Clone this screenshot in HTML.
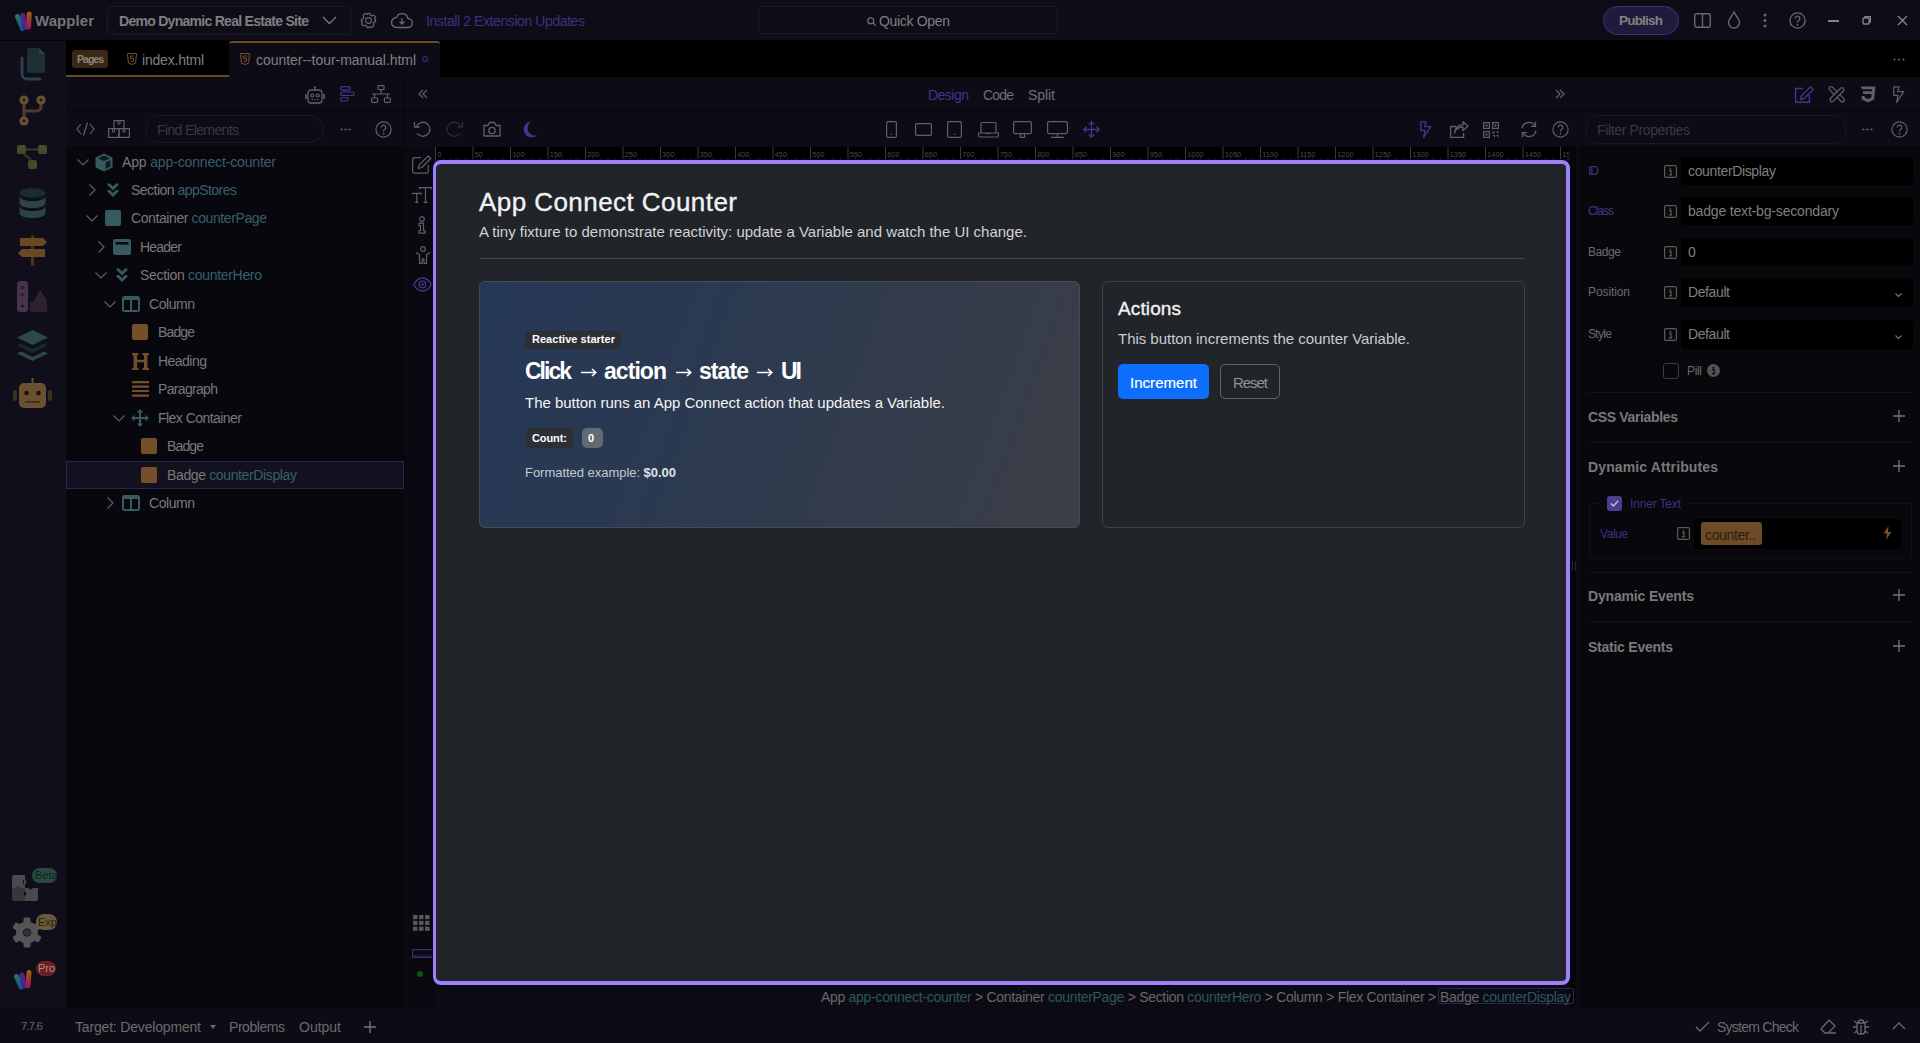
<!DOCTYPE html>
<html><head><meta charset="utf-8">
<style>
*{box-sizing:border-box;margin:0;padding:0}
html,body{width:1920px;height:1043px;overflow:hidden;background:#0a0911;font-family:"Liberation Sans",sans-serif;color:#858384}
.a{position:absolute}
svg{display:block;position:absolute;overflow:visible}
.t{position:absolute;white-space:nowrap;line-height:1}
#title{left:0;top:0;width:1920px;height:40px;background:#0e0c17}
#act{left:0;top:41px;width:66px;height:967px;background:#0f0e1a}
#tabs{left:66px;top:41px;width:1854px;height:36px;background:#000}
#lpanel{left:66px;top:146px;width:338px;height:862px;background:#08070d}
#lhead{left:66px;top:77px;width:338px;height:69px;background:#0d0c16}
#center{left:405px;top:146px;width:1176px;height:862px;background:#0c0b14}
#chead{left:405px;top:77px;width:1176px;height:69px;background:#0d0c16}
#rpanel{left:1582px;top:146px;width:338px;height:862px;background:#07070c}
#rhead{left:1582px;top:77px;width:338px;height:69px;background:#0d0c16}
#status{left:0;top:1008px;width:1920px;height:35px;background:#0d0c16}
.hl{height:1px;background:#07060c}
.vl{width:1px;background:#07060c}
.gray{color:#858384}
.teal{color:#30565e}
.purp{color:#41378c}
</style></head>
<body>
<!-- TITLE BAR -->
<div id="title" class="a"></div>
<div class="a hl" style="left:0;top:40px;width:1920px;background:#050409"></div>
<div id="act" class="a"></div>
<div id="tabs" class="a"></div>
<div id="lhead" class="a"></div>
<div id="lpanel" class="a"></div>
<div id="chead" class="a"></div>
<div id="center" class="a"></div>
<div id="rhead" class="a"></div>
<div id="rpanel" class="a"></div>
<div id="status" class="a"></div>

<!-- title content -->
<svg style="left:14px;top:11px" width="20" height="19" viewBox="0 0 20 19"><defs><linearGradient id="lg1" x1="0" y1="0" x2="0" y2="1"><stop offset="0" stop-color="#1a7a6a"/><stop offset="1" stop-color="#1d4f8a"/></linearGradient><linearGradient id="lg2" x1="0" y1="0" x2="0" y2="1"><stop offset="0" stop-color="#6a1a8a"/><stop offset="1" stop-color="#3a2a8a"/></linearGradient><linearGradient id="lg3" x1="0" y1="0" x2="0" y2="1"><stop offset="0" stop-color="#9a5a14"/><stop offset="1" stop-color="#9a1a5a"/></linearGradient></defs>
<path d="M3.5 5.5 L8.5 17.5" stroke="url(#lg1)" stroke-width="5" stroke-linecap="round"/>
<path d="M8.8 4.5 L11 16.5" stroke="url(#lg2)" stroke-width="5" stroke-linecap="round"/>
<path d="M15.2 3 L14.6 16" stroke="url(#lg3)" stroke-width="5" stroke-linecap="round"/></svg>
<div class="t" style="left:35px;top:13px;font-size:15px;color:#767474;font-weight:bold;letter-spacing:0.062px">Wappler</div>
<div class="a" style="left:107px;top:6px;width:244px;height:29px;border:1px solid #1c1a28;border-radius:4px"></div>
<div class="t" style="left:119px;top:14px;font-size:14px;color:#817f7f;font-weight:bold;letter-spacing:-0.718px">Demo Dynamic Real Estate Site</div>
<svg style="left:322px;top:16px" width="15" height="9" viewBox="0 0 15 9"><path d="M1 1 L7.5 7.5 L14 1" fill="none" stroke="#7a7670" stroke-width="1.4"/></svg>
<svg style="left:360px;top:12px" width="17" height="17" viewBox="0 0 24 24"><path d="M12 8a4 4 0 1 0 0 8a4 4 0 1 0 0-8z M10 2h4l.6 2.6 2.2 1 2.3-1.4 2.8 2.8-1.4 2.3 1 2.2L22 10v4l-2.6.6-1 2.2 1.4 2.3-2.8 2.8-2.3-1.4-2.2 1L14 22h-4l-.6-2.6-2.2-1-2.3 1.4-2.8-2.8 1.4-2.3-1-2.2L2 14v-4l2.6-.6 1-2.2L4.2 4.9 7 2.1l2.3 1.4 2.2-1z" fill="none" stroke="#6a6869" stroke-width="1.6"/></svg>
<svg style="left:391px;top:12px" width="22" height="17" viewBox="0 0 22 17"><path d="M5.5 15.5h11a4.5 4.5 0 0 0 .5-9 6 6 0 0 0-11.5-1A5 5 0 0 0 5.5 15.5z" fill="none" stroke="#6a6869" stroke-width="1.4"/><path d="M11 6v6M8.5 9.5 11 12l2.5-2.5" fill="none" stroke="#6a6869" stroke-width="1.3"/></svg>
<div class="t" style="left:426px;top:14px;font-size:14px;color:#3b3280;letter-spacing:-0.41px">Install 2 Extension Updates</div>
<div class="a" style="left:758px;top:6px;width:300px;height:28px;border:1px solid #1c1a28;border-radius:4px"></div>
<svg style="left:867px;top:17px" width="9" height="9" viewBox="0 0 9 9"><circle cx="3.8" cy="3.8" r="3" fill="none" stroke="#7a7670" stroke-width="1.2"/><path d="M6 6l2.6 2.6" stroke="#7a7670" stroke-width="1.3"/></svg>
<div class="t" style="left:879px;top:14px;font-size:14px;color:#817f7f;letter-spacing:-0.326px">Quick Open</div>
<div class="a" style="left:1603px;top:6px;width:76px;height:29px;border:1.5px solid #3b3380;border-radius:15px;background:#1f1b3d"></div>
<div class="t" style="left:1619px;top:14px;font-size:13.5px;color:#84827e;font-weight:bold;letter-spacing:-0.794px">Publish</div>
<svg style="left:1694px;top:13px" width="17" height="15" viewBox="0 0 17 15"><rect x="0.7" y="0.7" width="15.6" height="13.6" rx="2" fill="none" stroke="#6a6869" stroke-width="1.4"/><path d="M8.5 1v13" stroke="#6a6869" stroke-width="1.4"/></svg>
<svg style="left:1727px;top:11px" width="14" height="18" viewBox="0 0 14 18"><path d="M7 1C5 5 1.5 8 1.5 11.5a5.5 5.5 0 0 0 11 0C12.5 8 9 5 7 1z" fill="none" stroke="#6a6869" stroke-width="1.4"/></svg>
<svg style="left:1763px;top:13px" width="4" height="15" viewBox="0 0 4 15"><circle cx="2" cy="2" r="1.5" fill="#6a6869"/><circle cx="2" cy="7.5" r="1.5" fill="#6a6869"/><circle cx="2" cy="13" r="1.5" fill="#6a6869"/></svg>
<svg style="left:1789px;top:12px" width="17" height="17" viewBox="0 0 17 17"><circle cx="8.5" cy="8.5" r="7.6" fill="none" stroke="#6a6869" stroke-width="1.3"/><path d="M6.2 6.5a2.3 2.3 0 1 1 3.3 2c-.7.4-1 .8-1 1.6v.6" fill="none" stroke="#6a6869" stroke-width="1.3"/><circle cx="8.5" cy="12.8" r=".9" fill="#6a6869"/></svg>
<div class="a" style="left:1828px;top:20px;width:11px;height:1.5px;background:#858384"></div>
<svg style="left:1862px;top:15px" width="10" height="10" viewBox="0 0 10 10"><rect x="1" y="3" width="6" height="6" rx="1" fill="none" stroke="#858384" stroke-width="1.4"/><path d="M3 3V1.7h5.3V7H7" fill="none" stroke="#858384" stroke-width="1.4"/></svg>
<svg style="left:1897px;top:15px" width="11" height="11" viewBox="0 0 11 11"><path d="M1 1l9 9M10 1l-9 9" stroke="#858384" stroke-width="1.4"/></svg>

<!-- TABS -->
<div class="a" style="left:72px;top:50px;width:36px;height:18px;background:#3a2715;border-radius:3px"></div>
<div class="t" style="left:77px;top:54px;font-size:10.5px;color:#8a857c;font-weight:bold;letter-spacing:-0.984px">Pages</div>
<div class="a" style="left:66px;top:75px;width:163px;height:2px;background:#6e4a22"></div>
<svg style="left:127px;top:53px" width="10" height="12" viewBox="0 0 10 12"><path d="M0.5 0.5h9l-.9 9.5L5 11.5 1.4 10z" fill="none" stroke="#7a5026" stroke-width="1"/><path d="M6.8 3H3.3l.2 2.4h3.1l-.2 2.6L5 8.5l-1.4-.5" fill="none" stroke="#7a5026" stroke-width="1"/></svg>
<div class="t" style="left:142px;top:53px;font-size:14px;color:#817f7f;letter-spacing:-0.201px">index.html</div>
<div class="a" style="left:229px;top:41px;width:211px;height:36px;background:#0d0c16;border-top:2px solid #6e4a22;border-radius:3px 3px 0 0"></div>
<svg style="left:240px;top:53px" width="10" height="12" viewBox="0 0 10 12"><path d="M0.5 0.5h9l-.9 9.5L5 11.5 1.4 10z" fill="none" stroke="#7a5026" stroke-width="1"/><path d="M6.8 3H3.3l.2 2.4h3.1l-.2 2.6L5 8.5l-1.4-.5" fill="none" stroke="#7a5026" stroke-width="1"/></svg>
<div class="t" style="left:256px;top:53px;font-size:14px;color:#817f7f;letter-spacing:-0.044px">counter--tour-manual.html</div>
<div class="a" style="left:422px;top:56px;width:6px;height:6px;border:1.3px solid #41378c;border-radius:50%"></div>
<svg style="left:1893px;top:58px" width="12" height="3" viewBox="0 0 12 3"><circle cx="1.5" cy="1.5" r="1" fill="#6a6869"/><circle cx="6" cy="1.5" r="1" fill="#6a6869"/><circle cx="10.5" cy="1.5" r="1" fill="#6a6869"/></svg>


<!-- ACTIVITY BAR -->
<svg style="left:19px;top:48px" width="27" height="32" viewBox="0 0 27 32"><path d="M3 10v16a5 5 0 0 0 5 5h13" fill="none" stroke="#2a4248" stroke-width="3" stroke-linecap="round"/><path d="M8 2a2 2 0 0 1 2-2h10l6 6v17a2 2 0 0 1-2 2H10a2 2 0 0 1-2-2z" fill="#1e2e34"/><path d="M20 0l6 6h-6z" fill="#2a4248"/></svg>
<svg style="left:19px;top:95px" width="27" height="31" viewBox="0 0 27 31"><path d="M5 9v13M22 9v2.5a4.5 4.5 0 0 1-4.5 4.5H5" fill="none" stroke="#4e3c28" stroke-width="3.2"/><circle cx="5" cy="5" r="4.6" fill="#6a5034"/><circle cx="22" cy="5" r="4.6" fill="#6a5034"/><circle cx="5" cy="26" r="4.6" fill="#6a5034"/><circle cx="5" cy="5" r="1.4" fill="#1a140c"/><circle cx="22" cy="5" r="1.4" fill="#1a140c"/><circle cx="5" cy="26" r="1.4" fill="#1a140c"/></svg>
<svg style="left:17px;top:145px" width="31" height="24" viewBox="0 0 31 24"><rect x="0" y="0" width="9" height="9" rx="2" fill="#48482a"/><rect x="21" y="0" width="9" height="9" rx="2" fill="#48482a"/><rect x="11" y="15" width="9" height="9" rx="2" fill="#48482a"/><path d="M9 4.5h12M7 9l7 6" stroke="#3a3a26" stroke-width="2.2"/></svg>
<svg style="left:19px;top:188px" width="27" height="30" viewBox="0 0 27 30"><ellipse cx="13.5" cy="5" rx="13" ry="5" fill="#1c2c2c"/><path d="M0.5 8c0 3 6 5 13 5s13-2 13-5v7c0 3-6 5-13 5S0.5 18 0.5 15z" fill="#2c4444"/><path d="M0.5 18c0 3 6 5 13 5s13-2 13-5v7c0 3-6 5-13 5S0.5 28 0.5 25z" fill="#2c4444"/></svg>
<svg style="left:17px;top:235px" width="31" height="31" viewBox="0 0 31 31"><rect x="14" y="0" width="3" height="31" rx="1.5" fill="#4a3418"/><path d="M3 3h23l4 4-4 4H3z" fill="#6a4822"/><path d="M28 14H5l-4 4 4 4h23z" fill="#6a4822"/></svg>
<svg style="left:17px;top:281px" width="31" height="31" viewBox="0 0 31 31"><rect x="0" y="0" width="11" height="31" rx="3" fill="#47334a"/><rect x="3.5" y="5" width="4" height="3.5" fill="#2e2232"/><rect x="3.5" y="12" width="4" height="3.5" fill="#2e2232"/><circle cx="5.5" cy="25" r="1.6" fill="#1e1620"/><path d="M13 27L23 9l7 10-9 12h-8z" fill="#2f2434"/><path d="M13 31v-10h17v10z" fill="#2a2030"/></svg>
<svg style="left:17px;top:330px" width="31" height="31" viewBox="0 0 31 31"><path d="M15.5 0L31 7.5 15.5 15 0 7.5z" fill="#2c4848"/><path d="M0 15.5l4-2 11.5 5.5 11.5-5.5 4 2L15.5 23z" fill="#1a2a2a"/><path d="M0 23.5l4-2 11.5 5.5 11.5-5.5 4 2L15.5 31z" fill="#2c4848"/></svg>
<svg style="left:13px;top:378px" width="39" height="30" viewBox="0 0 39 30"><rect x="18.5" y="0" width="2" height="5" fill="#6a5030"/><rect x="6" y="5" width="27" height="25" rx="5" fill="#6a5030"/><rect x="0" y="12" width="4" height="11" rx="2" fill="#3e3020"/><rect x="35" y="12" width="4" height="11" rx="2" fill="#3e3020"/><circle cx="13.5" cy="15" r="2.3" fill="#1a140c"/><circle cx="25.5" cy="15" r="2.3" fill="#1a140c"/><rect x="12" y="23" width="15" height="1.6" fill="#3a2c18"/></svg>
<!-- bottom activity -->
<svg style="left:12px;top:875px" width="26" height="26" viewBox="0 0 26 26"><path d="M0 2a2 2 0 0 1 2-2h10v4.5a2.5 2.5 0 0 0 0 4.5V13H8a2.5 2.5 0 0 0-4.5 0H0z" fill="#4a494d"/><path d="M0 13h3.5a2.5 2.5 0 0 1 4.5 0H13v3.5a2.5 2.5 0 0 0 0 4.5V26H2a2 2 0 0 1-2-2z" fill="#38373b"/><path d="M13 13h3.5a2.5 2.5 0 0 0 4.5 0H26v11a2 2 0 0 1-2 2H13v-5a2.5 2.5 0 0 0 0-4.5z" fill="#4a494d"/><path d="M12 0h1v4.5a2.5 2.5 0 0 1 0 4.5V13H12z" fill="#4a494d"/></svg>
<div class="a" style="left:32px;top:868px;width:25px;height:15px;border-radius:8px;background:#2c4a44"></div>
<div class="t" style="left:35px;top:870px;font-size:11px;color:#10201c">Beta</div>
<svg style="left:12px;top:917px" width="30" height="31" viewBox="0 0 30 31"><g fill="#555457"><circle cx="15" cy="15.5" r="11"/><rect x="11.5" y="0.5" width="7" height="6" rx="1.5"/><rect x="11.5" y="24.5" width="7" height="6" rx="1.5"/><rect x="11.5" y="0.5" width="7" height="6" rx="1.5" transform="rotate(60 15 15.5)"/><rect x="11.5" y="24.5" width="7" height="6" rx="1.5" transform="rotate(60 15 15.5)"/><rect x="11.5" y="0.5" width="7" height="6" rx="1.5" transform="rotate(120 15 15.5)"/><rect x="11.5" y="24.5" width="7" height="6" rx="1.5" transform="rotate(120 15 15.5)"/></g><circle cx="15" cy="15.5" r="4.3" fill="#1e1e22"/><circle cx="15" cy="15.5" r="3" fill="#333236"/></svg>
<div class="a" style="left:36px;top:914px;width:21px;height:16px;border-radius:8px;background:#6a5a38"></div>
<div class="t" style="left:38px;top:917px;font-size:11px;color:#2a2010">Exp</div>
<svg style="left:13px;top:969px" width="21" height="21" viewBox="0 0 21 21"><path d="M3.5 7.5 L8 18" stroke="url(#lg1)" stroke-width="5" stroke-linecap="round"/><path d="M9 6 L11 17" stroke="url(#lg2)" stroke-width="5" stroke-linecap="round"/><path d="M16 3.5 L15 17" stroke="url(#lg3)" stroke-width="5" stroke-linecap="round"/></svg>
<div class="a" style="left:36px;top:961px;width:20px;height:15px;border-radius:8px;background:#6a2020"></div>
<div class="t" style="left:38px;top:963px;font-size:11px;color:#b08a8a">Pro</div>

<!-- STATUS -->
<div class="t" style="left:21px;top:1021px;font-size:11.5px;color:#656364;letter-spacing:-0.895px">7.7.6</div>
<div class="t" style="left:75px;top:1020px;font-size:14px;color:#6c6a6b;letter-spacing:-0.177px">Target: Development</div>
<svg style="left:210px;top:1025px" width="6" height="4" viewBox="0 0 6 4"><path d="M0 0h6L3 4z" fill="#6a6869"/></svg>
<div class="t" style="left:229px;top:1020px;font-size:14px;color:#6c6a6b;letter-spacing:-0.449px">Problems</div>
<div class="t" style="left:299px;top:1020px;font-size:14px;color:#6c6a6b;letter-spacing:-0.006px">Output</div>
<svg style="left:364px;top:1021px" width="12" height="12" viewBox="0 0 12 12"><path d="M6 0v12M0 6h12" stroke="#767475" stroke-width="1.4"/></svg>
<svg style="left:1695px;top:1021px" width="15" height="11" viewBox="0 0 15 11"><path d="M1 6l4 4 9-9" fill="none" stroke="#6a6869" stroke-width="1.4"/></svg>
<div class="t" style="left:1717px;top:1020px;font-size:14px;color:#6c6a6b;letter-spacing:-0.75px">System Check</div>
<svg style="left:1819px;top:1018px" width="18" height="16" viewBox="0 0 18 16"><path d="M6 15h11M2 11l8-9 6 6-7 7H6z" fill="none" stroke="#6a6869" stroke-width="1.3"/></svg>
<svg style="left:1852px;top:1017px" width="18" height="18" viewBox="0 0 18 18"><path d="M5 6h8v8a3 3 0 0 1-3 3H8a3 3 0 0 1-3-3z M6 6a3 3 0 0 1 6 0 M1 10h4M13 10h4M2 4l3 2M16 4l-3 2M2 16l3-2M16 16l-3-2M9 8v8" fill="none" stroke="#6a6869" stroke-width="1.3"/></svg>
<svg style="left:1892px;top:1022px" width="14" height="8" viewBox="0 0 14 8"><path d="M1 7l6-6 6 6" fill="none" stroke="#6a6869" stroke-width="1.4"/></svg>


<!-- LEFT PANEL HEADER -->
<div class="a hl" style="left:66px;top:111px;width:338px;background:#07060c"></div>
<div class="a vl" style="left:404px;top:77px;height:931px;background:#07060c"></div>
<svg style="left:305px;top:86px" width="20" height="18" viewBox="0 0 20 18"><path d="M10 1v3" stroke="#626064" stroke-width="1.3"/><circle cx="10" cy="1.2" r="1" fill="#626064"/><rect x="3" y="4" width="14" height="13" rx="3" fill="none" stroke="#626064" stroke-width="1.3"/><path d="M1 8v5M19 8v5" stroke="#626064" stroke-width="1.6"/><circle cx="7.3" cy="9.5" r="1.5" fill="none" stroke="#626064" stroke-width="1.2"/><circle cx="12.7" cy="9.5" r="1.5" fill="none" stroke="#626064" stroke-width="1.2"/><path d="M6.5 13.5h1.5M9.3 13.5h1.5M12 13.5h1.5" stroke="#626064" stroke-width="1"/></svg>
<svg style="left:340px;top:86px" width="15" height="16" viewBox="0 0 15 16"><rect x="0.6" y="0.6" width="9.5" height="3.5" rx="1.7" fill="none" stroke="#41378c" stroke-width="1.2"/><rect x="0.6" y="6" width="13.6" height="3.5" rx="1.7" fill="none" stroke="#41378c" stroke-width="1.2"/><rect x="0.6" y="11.5" width="7.5" height="3.5" rx="1.7" fill="none" stroke="#41378c" stroke-width="1.2"/></svg>
<svg style="left:371px;top:85px" width="20" height="18" viewBox="0 0 20 18"><rect x="7" y="0.6" width="6" height="4" rx="0.8" fill="none" stroke="#626064" stroke-width="1.2"/><rect x="0.6" y="13" width="6" height="4.4" rx="0.8" fill="none" stroke="#626064" stroke-width="1.2"/><rect x="13.4" y="13" width="6" height="4.4" rx="0.8" fill="none" stroke="#626064" stroke-width="1.2"/><path d="M10 4.6v4.4M3.6 13V9h12.8v4M1 9h18" fill="none" stroke="#626064" stroke-width="1.2"/></svg>
<svg style="left:76px;top:122px" width="19" height="14" viewBox="0 0 19 14"><path d="M5 2L1 7l4 5M14 2l4 5-4 5M11.5 0.5L7.5 13.5" fill="none" stroke="#626064" stroke-width="1.2"/></svg>
<svg style="left:108px;top:120px" width="22" height="18" viewBox="0 0 22 18"><rect x="6" y="0.6" width="10" height="8" fill="none" stroke="#626064" stroke-width="1.2"/><rect x="0.6" y="8.6" width="10.4" height="8.8" fill="none" stroke="#626064" stroke-width="1.2"/><rect x="11" y="8.6" width="10.4" height="8.8" fill="none" stroke="#626064" stroke-width="1.2"/><path d="M10 1v3h2V1M4.5 9v3h2V9M15 9v3h2V9" fill="none" stroke="#626064" stroke-width="1"/></svg>
<div class="a" style="left:145px;top:115px;width:179px;height:28px;border:1px solid #1b1926;border-radius:14px"></div>
<div class="t" style="left:157px;top:123px;font-size:14px;color:#3a3744;letter-spacing:-0.624px">Find Elements</div>
<svg style="left:340px;top:128px" width="11" height="3" viewBox="0 0 11 3"><circle cx="1.5" cy="1.5" r="1.1" fill="#626064"/><circle cx="5.5" cy="1.5" r="1.1" fill="#626064"/><circle cx="9.5" cy="1.5" r="1.1" fill="#626064"/></svg>
<svg style="left:375px;top:121px" width="17" height="17" viewBox="0 0 17 17"><circle cx="8.5" cy="8.5" r="7.6" fill="none" stroke="#626064" stroke-width="1.2"/><path d="M6.2 6.5a2.3 2.3 0 1 1 3.3 2c-.7.4-1 .8-1 1.6v.6" fill="none" stroke="#626064" stroke-width="1.2"/><circle cx="8.5" cy="12.8" r=".9" fill="#626064"/></svg>

<!-- TREE -->
<div class="a" style="left:66px;top:461px;width:338px;height:28px;background:#13111f;border:1px solid #2a2450"></div>
<svg style="left:77px;top:158.5px" width="12" height="7" viewBox="0 0 12 7"><path d="M0.5 0.5L6 6l5.5-5.5" fill="none" stroke="#5f5d60" stroke-width="1.2"/></svg>
<svg style="left:95px;top:152.5px" width="18" height="19" viewBox="0 0 18 19"><path d="M9 0.5L17.5 4.5v10L9 18.5 0.5 14.5v-10z" fill="#375a5e"/><path d="M3 5.2L9 2.5l6 2.7-6 2.8z" fill="#101a1c"/><path d="M10.5 9.5l5-2.3v6.3l-5 2.4z" fill="#101a1c"/></svg>
<div class="t tree" id="tr0" style="left:122px;top:155px;font-size:14px;color:#7a7879;letter-spacing:-0.147px">App <span style="color:#36606a">app-connect-counter</span></div>
<svg style="left:88.5px;top:184px" width="7" height="12" viewBox="0 0 7 12"><path d="M0.5 0.5L6 6l-5.5 5.5" fill="none" stroke="#5f5d60" stroke-width="1.2"/></svg>
<svg style="left:107px;top:182.5px" width="12" height="15" viewBox="0 0 12 15"><path d="M0.5 0.5h2.5L6 3.5 9 0.5h2.5v1.5L6 7.5 0.5 2z" fill="#375a5e"/><path d="M0.5 7h2.5L6 10 9 7h2.5v1.5L6 14 0.5 8.5z" fill="#375a5e"/></svg>
<div class="t tree" id="tr1" style="left:131px;top:183px;font-size:14px;color:#7a7879;letter-spacing:-0.526px">Section <span style="color:#36606a">appStores</span></div>
<svg style="left:86px;top:214.5px" width="12" height="7" viewBox="0 0 12 7"><path d="M0.5 0.5L6 6l5.5-5.5" fill="none" stroke="#5f5d60" stroke-width="1.2"/></svg>
<div class="a" style="left:105px;top:210px;width:16px;height:16px;border-radius:2px;background:#375a5e"></div>
<div class="t tree" id="tr2" style="left:131px;top:211px;font-size:14px;color:#7a7879;letter-spacing:-0.4px">Container <span style="color:#36606a">counterPage</span></div>
<svg style="left:97.5px;top:241px" width="7" height="12" viewBox="0 0 7 12"><path d="M0.5 0.5L6 6l-5.5 5.5" fill="none" stroke="#5f5d60" stroke-width="1.2"/></svg>
<svg style="left:113px;top:239px" width="18" height="16" viewBox="0 0 18 16"><rect x="0" y="0" width="18" height="16" rx="2" fill="#375a5e"/><rect x="2.5" y="3" width="13" height="2.6" fill="#0a0911"/></svg>
<div class="t tree" id="tr3" style="left:140px;top:240px;font-size:14px;color:#7a7879;letter-spacing:-0.784px">Header</div>
<svg style="left:95px;top:271.5px" width="12" height="7" viewBox="0 0 12 7"><path d="M0.5 0.5L6 6l5.5-5.5" fill="none" stroke="#5f5d60" stroke-width="1.2"/></svg>
<svg style="left:116px;top:267.5px" width="12" height="15" viewBox="0 0 12 15"><path d="M0.5 0.5h2.5L6 3.5 9 0.5h2.5v1.5L6 7.5 0.5 2z" fill="#375a5e"/><path d="M0.5 7h2.5L6 10 9 7h2.5v1.5L6 14 0.5 8.5z" fill="#375a5e"/></svg>
<div class="t tree" id="tr4" style="left:140px;top:268px;font-size:14px;color:#7a7879;letter-spacing:-0.313px">Section <span style="color:#36606a">counterHero</span></div>
<svg style="left:104px;top:300.5px" width="12" height="7" viewBox="0 0 12 7"><path d="M0.5 0.5L6 6l5.5-5.5" fill="none" stroke="#5f5d60" stroke-width="1.2"/></svg>
<svg style="left:122px;top:296px" width="18" height="16" viewBox="0 0 18 16"><rect x="1" y="1" width="16" height="14" rx="1.5" fill="none" stroke="#375a5e" stroke-width="2"/><path d="M9 1v14" stroke="#375a5e" stroke-width="2"/><rect x="1" y="1" width="16" height="3" fill="#375a5e"/></svg>
<div class="t tree" id="tr5" style="left:149px;top:297px;font-size:14px;color:#7a7879;letter-spacing:-0.45px">Column</div>
<div class="a" style="left:132px;top:324px;width:16px;height:16px;border-radius:2px;background:#74502a"></div>
<div class="t tree" id="tr6" style="left:158px;top:325px;font-size:14px;color:#7a7879;letter-spacing:-0.871px">Badge</div>
<svg style="left:131.5px;top:352.5px" width="17" height="17" viewBox="0 0 17 17"><path d="M0 0h6.5v2.2H5v4.6h7V2.2h-1.5V0H17v2.2h-1.6v12.6H17V17h-6.5v-2.2H12v-5.6H5v5.6h1.5V17H0v-2.2h1.6V2.2H0z" fill="#74502a"/></svg>
<div class="t tree" id="tr7" style="left:158px;top:354px;font-size:14px;color:#7a7879;letter-spacing:-0.526px">Heading</div>
<svg style="left:131.5px;top:381px" width="17" height="16" viewBox="0 0 17 16"><path d="M0 1.2h17M0 5.6h17M0 10h17M0 14.6h17" stroke="#74502a" stroke-width="2.2"/></svg>
<div class="t tree" id="tr8" style="left:158px;top:382px;font-size:14px;color:#7a7879;letter-spacing:-0.674px">Paragraph</div>
<svg style="left:113px;top:414.5px" width="12" height="7" viewBox="0 0 12 7"><path d="M0.5 0.5L6 6l5.5-5.5" fill="none" stroke="#5f5d60" stroke-width="1.2"/></svg>
<svg style="left:131px;top:409px" width="18" height="18" viewBox="0 0 18 18"><path d="M9 1v16M1 9h16" stroke="#375a5e" stroke-width="2"/><path d="M9 0l3.2 3.5H5.8zM9 18l3.2-3.5H5.8zM0 9l3.5-3.2v6.4zM18 9l-3.5-3.2v6.4z" fill="#375a5e"/></svg>
<div class="t tree" id="tr9" style="left:158px;top:411px;font-size:14px;color:#7a7879;letter-spacing:-0.542px">Flex Container</div>
<div class="a" style="left:141px;top:438px;width:16px;height:16px;border-radius:2px;background:#74502a"></div>
<div class="t tree" id="tr10" style="left:167px;top:439px;font-size:14px;color:#7a7879;letter-spacing:-0.871px">Badge</div>
<div class="a" style="left:141px;top:467px;width:16px;height:16px;border-radius:2px;background:#74502a"></div>
<div class="t tree" id="tr11" style="left:167px;top:468px;font-size:14px;color:#7a7879;letter-spacing:-0.368px">Badge <span style="color:#36606a">counterDisplay</span></div>
<svg style="left:106.5px;top:497px" width="7" height="12" viewBox="0 0 7 12"><path d="M0.5 0.5L6 6l-5.5 5.5" fill="none" stroke="#5f5d60" stroke-width="1.2"/></svg>
<svg style="left:122px;top:495px" width="18" height="16" viewBox="0 0 18 16"><rect x="1" y="1" width="16" height="14" rx="1.5" fill="none" stroke="#375a5e" stroke-width="2"/><path d="M9 1v14" stroke="#375a5e" stroke-width="2"/><rect x="1" y="1" width="16" height="3" fill="#375a5e"/></svg>
<div class="t tree" id="tr12" style="left:149px;top:496px;font-size:14px;color:#7a7879;letter-spacing:-0.45px">Column</div>

<!-- CENTER HEADER -->
<div class="a hl" style="left:405px;top:111px;width:1176px;background:#07060c"></div>
<div class="a vl" style="left:1581px;top:77px;height:931px;background:#07060c"></div>
<svg style="left:418px;top:89px" width="10" height="10" viewBox="0 0 10 10"><path d="M5 1L1 5l4 4M9 1L5 5l4 4" fill="none" stroke="#626064" stroke-width="1.2"/></svg>
<div class="t" style="left:928px;top:88px;font-size:14px;color:#40358a;letter-spacing:-0.519px">Design</div>
<div class="t" style="left:983px;top:88px;font-size:14px;color:#727071;letter-spacing:-0.823px">Code</div>
<div class="t" style="left:1028px;top:88px;font-size:14px;color:#727071;letter-spacing:-0.059px">Split</div>
<svg style="left:1555px;top:89px" width="10" height="10" viewBox="0 0 10 10"><path d="M1 1l4 4-4 4M5 1l4 4-4 4" fill="none" stroke="#626064" stroke-width="1.2"/></svg>
<!-- row2 -->
<svg style="left:413px;top:120px" width="18" height="18" viewBox="0 0 18 18"><path d="M3.5 6.5A7 7 0 1 1 4 13" fill="none" stroke="#626064" stroke-width="1.3"/><path d="M1.5 2v5h5" fill="none" stroke="#626064" stroke-width="1.3"/></svg>
<svg style="left:446px;top:120px" width="18" height="18" viewBox="0 0 18 18"><path d="M14.5 6.5A7 7 0 1 0 14 13" fill="none" stroke="#2c2a34" stroke-width="1.3"/><path d="M16.5 2v5h-5" fill="none" stroke="#2c2a34" stroke-width="1.3"/></svg>
<svg style="left:483px;top:121px" width="18" height="16" viewBox="0 0 18 16"><path d="M1 4.5h4l1.5-3h5l1.5 3h4v10.5H1z" fill="none" stroke="#626064" stroke-width="1.3" stroke-linejoin="round"/><circle cx="9" cy="9.5" r="3.2" fill="none" stroke="#626064" stroke-width="1.3"/></svg>
<svg style="left:523px;top:121px" width="15" height="17" viewBox="0 0 15 17"><path d="M9 0.5A8 8 0 1 0 14.5 14 6.8 6.8 0 0 1 9 0.5z" fill="#41378c"/></svg>
<g></g>
<svg style="left:886px;top:121px" width="11" height="17" viewBox="0 0 11 17"><rect x="0.6" y="0.6" width="9.8" height="15.8" rx="1.5" fill="none" stroke="#626064" stroke-width="1.2"/><circle cx="5.5" cy="13.3" r=".8" fill="#626064"/></svg>
<svg style="left:915px;top:123px" width="17" height="13" viewBox="0 0 17 13"><rect x="0.6" y="0.6" width="15.8" height="11.8" rx="1.5" fill="none" stroke="#626064" stroke-width="1.2"/></svg>
<svg style="left:947px;top:121px" width="15" height="17" viewBox="0 0 15 17"><rect x="0.6" y="0.6" width="13.8" height="15.8" rx="1.5" fill="none" stroke="#626064" stroke-width="1.2"/><circle cx="7.5" cy="13.3" r=".8" fill="#626064"/></svg>
<svg style="left:978px;top:122px" width="21" height="16" viewBox="0 0 21 16"><path d="M3 11V1.5a1 1 0 0 1 1-1h13a1 1 0 0 1 1 1V11" fill="none" stroke="#626064" stroke-width="1.2"/><path d="M0.6 11h19.8v2.5a1.5 1.5 0 0 1-1.5 1.5H2a1.5 1.5 0 0 1-1.5-1.5z" fill="none" stroke="#626064" stroke-width="1.2"/><path d="M8 11.5h5" stroke="#626064" stroke-width="1"/></svg>
<svg style="left:1013px;top:121px" width="19" height="17" viewBox="0 0 19 17"><rect x="0.6" y="0.6" width="17.8" height="12" rx="1.5" fill="none" stroke="#626064" stroke-width="1.2"/><path d="M7 16.4h5M8 12.6l-1 3.8M11 12.6l1 3.8" fill="none" stroke="#626064" stroke-width="1.2"/></svg>
<svg style="left:1047px;top:121px" width="21" height="17" viewBox="0 0 21 17"><rect x="0.6" y="0.6" width="19.8" height="12" rx="1.5" fill="none" stroke="#626064" stroke-width="1.2"/><path d="M4 16.4h13M10.5 12.6v3.8" fill="none" stroke="#626064" stroke-width="1.2"/></svg>
<svg style="left:1083px;top:121px" width="17" height="17" viewBox="0 0 17 17"><path d="M8.5 1v15M1 8.5h15" stroke="#41378c" stroke-width="1.3"/><path d="M5.8 3.5L8.5 0.8l2.7 2.7M5.8 13.5l2.7 2.7 2.7-2.7M3.5 5.8L0.8 8.5l2.7 2.7M13.5 5.8l2.7 2.7-2.7 2.7" fill="none" stroke="#41378c" stroke-width="1.3"/></svg>
<svg style="left:1420px;top:121px" width="12" height="17" viewBox="0 0 12 17"><path d="M0.8 0.8H6L4.8 5.6h6L3.6 16.4l1.4-7H0.8z" fill="none" stroke="#41378c" stroke-width="1.3" stroke-linejoin="round"/></svg>
<svg style="left:1449px;top:121px" width="20" height="17" viewBox="0 0 20 17"><path d="M7 5.5H1.6v10.8h13V12" fill="none" stroke="#626064" stroke-width="1.3"/><path d="M5.5 12c1-4 4-6 8.5-6V9.5L19 5 14 0.7v3C9 4 6 7 5.5 12z" fill="none" stroke="#626064" stroke-width="1.3" stroke-linejoin="round"/></svg>
<svg style="left:1483px;top:122px" width="16" height="16" viewBox="0 0 16 16"><rect x="0.6" y="0.6" width="5.8" height="5.8" fill="none" stroke="#626064" stroke-width="1.2"/><rect x="9.6" y="0.6" width="5.8" height="5.8" fill="none" stroke="#626064" stroke-width="1.2"/><rect x="0.6" y="9.6" width="5.8" height="5.8" fill="none" stroke="#626064" stroke-width="1.2"/><rect x="2.5" y="2.5" width="2" height="2" fill="#626064"/><rect x="11.5" y="2.5" width="2" height="2" fill="#626064"/><rect x="2.5" y="11.5" width="2" height="2" fill="#626064"/><path d="M9.5 9.5h2v2h-2zM13 9.5h2.5v2.5M9.5 13h2.5v2.5M13 13h2.5v2.5" fill="#626064"/></svg>
<svg style="left:1520px;top:121px" width="18" height="17" viewBox="0 0 18 17"><path d="M2 7.5A7 7 0 0 1 15 5M16 9.5A7 7 0 0 1 3 12" fill="none" stroke="#626064" stroke-width="1.3"/><path d="M15.5 0.8v4.5H11M2.5 16.2v-4.5H7" fill="none" stroke="#626064" stroke-width="1.3"/></svg>
<svg style="left:1552px;top:121px" width="17" height="17" viewBox="0 0 17 17"><circle cx="8.5" cy="8.5" r="7.6" fill="none" stroke="#626064" stroke-width="1.2"/><path d="M6.2 6.5a2.3 2.3 0 1 1 3.3 2c-.7.4-1 .8-1 1.6v.6" fill="none" stroke="#626064" stroke-width="1.2"/><circle cx="8.5" cy="12.8" r=".9" fill="#626064"/></svg>
<!-- narrow left toolbar -->
<div class="a" style="left:405px;top:146px;width:30px;height:862px;background:#0a0911"></div>
<svg style="left:412px;top:155px" width="20" height="19" viewBox="0 0 20 19"><path d="M9 2.6H2.2a1.5 1.5 0 0 0-1.5 1.5v12.6a1.5 1.5 0 0 0 1.5 1.5h12.6a1.5 1.5 0 0 0 1.5-1.5V10" fill="none" stroke="#626064" stroke-width="1.2"/><path d="M16.2 0.9l2.6 2.6-9 9-3.6 1 1-3.6z" fill="none" stroke="#626064" stroke-width="1.2" stroke-linejoin="round"/></svg>
<svg style="left:412px;top:187px" width="20" height="16" viewBox="0 0 20 16"><path d="M0.6 7.5v-1.2h8.5v1.2M4.8 6.3v9.1M3.2 15.4h3.2M7.5 2.2V0.7h12v1.5M13.5 0.7v14.7M11.5 15.4h4" fill="none" stroke="#626064" stroke-width="1.2"/></svg>
<svg style="left:417px;top:216px" width="10" height="18" viewBox="0 0 10 18"><circle cx="5" cy="3" r="2.3" fill="none" stroke="#626064" stroke-width="1.2"/><path d="M2 7.2h4.5v7.5H8v2.5H2v-2.5h1.5v-5H2z" fill="none" stroke="#626064" stroke-width="1.2" stroke-linejoin="round"/></svg>
<svg style="left:415px;top:246px" width="16" height="18" viewBox="0 0 16 18"><circle cx="8" cy="3" r="2.3" fill="none" stroke="#626064" stroke-width="1.2"/><path d="M1 6.5l3.5 2.3v8.5h2.6v-4.5h1.8v4.5h2.6V8.8L15 6.5" fill="none" stroke="#626064" stroke-width="1.2" stroke-linejoin="round"/></svg>
<svg style="left:413px;top:277px" width="19" height="15" viewBox="0 0 19 15"><path d="M0.8 7.5C3 3 6 1 9.5 1s6.5 2 8.7 6.5C16 12 13 14 9.5 14S3 12 0.8 7.5z" fill="none" stroke="#41378c" stroke-width="1.3"/><circle cx="9.5" cy="7.5" r="3.3" fill="none" stroke="#41378c" stroke-width="1.3"/><circle cx="9.5" cy="7.5" r="1.3" fill="#41378c"/></svg>
<svg style="left:413px;top:915px" width="17" height="16" viewBox="0 0 17 16"><g fill="#5a5856"><rect x="0" y="0" width="4.5" height="4.2"/><rect x="6" y="0" width="4.5" height="4.2"/><rect x="12" y="0" width="4.5" height="4.2"/><rect x="0" y="5.8" width="4.5" height="4.2"/><rect x="6" y="5.8" width="4.5" height="4.2"/><rect x="12" y="5.8" width="4.5" height="4.2"/><rect x="0" y="11.6" width="4.5" height="4.2"/><rect x="6" y="11.6" width="4.5" height="4.2"/><rect x="12" y="11.6" width="4.5" height="4.2"/></g></svg>
<svg style="left:412px;top:949px" width="22" height="9" viewBox="0 0 22 9"><path d="M0.6 0.6h21v7.8H0.6z" fill="none" stroke="#3a3070" stroke-width="1.2"/><path d="M3 8V5.5M6 8V5.5M9 8V5.5M12 8V5.5M15 8V5.5M18 8V5.5" stroke="#3a3070" stroke-width="1"/></svg>
<div class="a" style="left:417px;top:971px;width:6px;height:6px;border-radius:50%;background:#0a5a10"></div>

<!-- RULER -->
<svg style="left:435px;top:147px;overflow:hidden" width="1134" height="14" viewBox="0 0 1134 14">
<rect x="0" y="0" width="1134" height="14" fill="#000"/>
<path d="M0.50 0V14" stroke="#3c3c3a" stroke-width="1"/>
<text x="2.30" y="9.6" font-family="Liberation Sans" font-size="7.3" fill="#4a4a48">0</text>
<path d="M4.25 12.5V14" stroke="#262624" stroke-width="1"/>
<path d="M8.00 11V14" stroke="#383834" stroke-width="1"/>
<path d="M11.75 12.5V14" stroke="#262624" stroke-width="1"/>
<path d="M15.50 11V14" stroke="#383834" stroke-width="1"/>
<path d="M19.25 12.5V14" stroke="#262624" stroke-width="1"/>
<path d="M23.00 11V14" stroke="#383834" stroke-width="1"/>
<path d="M26.75 12.5V14" stroke="#262624" stroke-width="1"/>
<path d="M30.50 11V14" stroke="#383834" stroke-width="1"/>
<path d="M34.25 12.5V14" stroke="#262624" stroke-width="1"/>
<path d="M38.00 0V14" stroke="#3c3c3a" stroke-width="1"/>
<text x="39.80" y="9.6" font-family="Liberation Sans" font-size="7.3" fill="#4a4a48">50</text>
<path d="M41.75 12.5V14" stroke="#262624" stroke-width="1"/>
<path d="M45.50 11V14" stroke="#383834" stroke-width="1"/>
<path d="M49.25 12.5V14" stroke="#262624" stroke-width="1"/>
<path d="M53.00 11V14" stroke="#383834" stroke-width="1"/>
<path d="M56.75 12.5V14" stroke="#262624" stroke-width="1"/>
<path d="M60.50 11V14" stroke="#383834" stroke-width="1"/>
<path d="M64.25 12.5V14" stroke="#262624" stroke-width="1"/>
<path d="M68.00 11V14" stroke="#383834" stroke-width="1"/>
<path d="M71.75 12.5V14" stroke="#262624" stroke-width="1"/>
<path d="M75.50 0V14" stroke="#3c3c3a" stroke-width="1"/>
<text x="77.30" y="9.6" font-family="Liberation Sans" font-size="7.3" fill="#4a4a48">100</text>
<path d="M79.25 12.5V14" stroke="#262624" stroke-width="1"/>
<path d="M83.00 11V14" stroke="#383834" stroke-width="1"/>
<path d="M86.75 12.5V14" stroke="#262624" stroke-width="1"/>
<path d="M90.50 11V14" stroke="#383834" stroke-width="1"/>
<path d="M94.25 12.5V14" stroke="#262624" stroke-width="1"/>
<path d="M98.00 11V14" stroke="#383834" stroke-width="1"/>
<path d="M101.75 12.5V14" stroke="#262624" stroke-width="1"/>
<path d="M105.50 11V14" stroke="#383834" stroke-width="1"/>
<path d="M109.25 12.5V14" stroke="#262624" stroke-width="1"/>
<path d="M113.00 0V14" stroke="#3c3c3a" stroke-width="1"/>
<text x="114.80" y="9.6" font-family="Liberation Sans" font-size="7.3" fill="#4a4a48">150</text>
<path d="M116.75 12.5V14" stroke="#262624" stroke-width="1"/>
<path d="M120.50 11V14" stroke="#383834" stroke-width="1"/>
<path d="M124.25 12.5V14" stroke="#262624" stroke-width="1"/>
<path d="M128.00 11V14" stroke="#383834" stroke-width="1"/>
<path d="M131.75 12.5V14" stroke="#262624" stroke-width="1"/>
<path d="M135.50 11V14" stroke="#383834" stroke-width="1"/>
<path d="M139.25 12.5V14" stroke="#262624" stroke-width="1"/>
<path d="M143.00 11V14" stroke="#383834" stroke-width="1"/>
<path d="M146.75 12.5V14" stroke="#262624" stroke-width="1"/>
<path d="M150.50 0V14" stroke="#3c3c3a" stroke-width="1"/>
<text x="152.30" y="9.6" font-family="Liberation Sans" font-size="7.3" fill="#4a4a48">200</text>
<path d="M154.25 12.5V14" stroke="#262624" stroke-width="1"/>
<path d="M158.00 11V14" stroke="#383834" stroke-width="1"/>
<path d="M161.75 12.5V14" stroke="#262624" stroke-width="1"/>
<path d="M165.50 11V14" stroke="#383834" stroke-width="1"/>
<path d="M169.25 12.5V14" stroke="#262624" stroke-width="1"/>
<path d="M173.00 11V14" stroke="#383834" stroke-width="1"/>
<path d="M176.75 12.5V14" stroke="#262624" stroke-width="1"/>
<path d="M180.50 11V14" stroke="#383834" stroke-width="1"/>
<path d="M184.25 12.5V14" stroke="#262624" stroke-width="1"/>
<path d="M188.00 0V14" stroke="#3c3c3a" stroke-width="1"/>
<text x="189.80" y="9.6" font-family="Liberation Sans" font-size="7.3" fill="#4a4a48">250</text>
<path d="M191.75 12.5V14" stroke="#262624" stroke-width="1"/>
<path d="M195.50 11V14" stroke="#383834" stroke-width="1"/>
<path d="M199.25 12.5V14" stroke="#262624" stroke-width="1"/>
<path d="M203.00 11V14" stroke="#383834" stroke-width="1"/>
<path d="M206.75 12.5V14" stroke="#262624" stroke-width="1"/>
<path d="M210.50 11V14" stroke="#383834" stroke-width="1"/>
<path d="M214.25 12.5V14" stroke="#262624" stroke-width="1"/>
<path d="M218.00 11V14" stroke="#383834" stroke-width="1"/>
<path d="M221.75 12.5V14" stroke="#262624" stroke-width="1"/>
<path d="M225.50 0V14" stroke="#3c3c3a" stroke-width="1"/>
<text x="227.30" y="9.6" font-family="Liberation Sans" font-size="7.3" fill="#4a4a48">300</text>
<path d="M229.25 12.5V14" stroke="#262624" stroke-width="1"/>
<path d="M233.00 11V14" stroke="#383834" stroke-width="1"/>
<path d="M236.75 12.5V14" stroke="#262624" stroke-width="1"/>
<path d="M240.50 11V14" stroke="#383834" stroke-width="1"/>
<path d="M244.25 12.5V14" stroke="#262624" stroke-width="1"/>
<path d="M248.00 11V14" stroke="#383834" stroke-width="1"/>
<path d="M251.75 12.5V14" stroke="#262624" stroke-width="1"/>
<path d="M255.50 11V14" stroke="#383834" stroke-width="1"/>
<path d="M259.25 12.5V14" stroke="#262624" stroke-width="1"/>
<path d="M263.00 0V14" stroke="#3c3c3a" stroke-width="1"/>
<text x="264.80" y="9.6" font-family="Liberation Sans" font-size="7.3" fill="#4a4a48">350</text>
<path d="M266.75 12.5V14" stroke="#262624" stroke-width="1"/>
<path d="M270.50 11V14" stroke="#383834" stroke-width="1"/>
<path d="M274.25 12.5V14" stroke="#262624" stroke-width="1"/>
<path d="M278.00 11V14" stroke="#383834" stroke-width="1"/>
<path d="M281.75 12.5V14" stroke="#262624" stroke-width="1"/>
<path d="M285.50 11V14" stroke="#383834" stroke-width="1"/>
<path d="M289.25 12.5V14" stroke="#262624" stroke-width="1"/>
<path d="M293.00 11V14" stroke="#383834" stroke-width="1"/>
<path d="M296.75 12.5V14" stroke="#262624" stroke-width="1"/>
<path d="M300.50 0V14" stroke="#3c3c3a" stroke-width="1"/>
<text x="302.30" y="9.6" font-family="Liberation Sans" font-size="7.3" fill="#4a4a48">400</text>
<path d="M304.25 12.5V14" stroke="#262624" stroke-width="1"/>
<path d="M308.00 11V14" stroke="#383834" stroke-width="1"/>
<path d="M311.75 12.5V14" stroke="#262624" stroke-width="1"/>
<path d="M315.50 11V14" stroke="#383834" stroke-width="1"/>
<path d="M319.25 12.5V14" stroke="#262624" stroke-width="1"/>
<path d="M323.00 11V14" stroke="#383834" stroke-width="1"/>
<path d="M326.75 12.5V14" stroke="#262624" stroke-width="1"/>
<path d="M330.50 11V14" stroke="#383834" stroke-width="1"/>
<path d="M334.25 12.5V14" stroke="#262624" stroke-width="1"/>
<path d="M338.00 0V14" stroke="#3c3c3a" stroke-width="1"/>
<text x="339.80" y="9.6" font-family="Liberation Sans" font-size="7.3" fill="#4a4a48">450</text>
<path d="M341.75 12.5V14" stroke="#262624" stroke-width="1"/>
<path d="M345.50 11V14" stroke="#383834" stroke-width="1"/>
<path d="M349.25 12.5V14" stroke="#262624" stroke-width="1"/>
<path d="M353.00 11V14" stroke="#383834" stroke-width="1"/>
<path d="M356.75 12.5V14" stroke="#262624" stroke-width="1"/>
<path d="M360.50 11V14" stroke="#383834" stroke-width="1"/>
<path d="M364.25 12.5V14" stroke="#262624" stroke-width="1"/>
<path d="M368.00 11V14" stroke="#383834" stroke-width="1"/>
<path d="M371.75 12.5V14" stroke="#262624" stroke-width="1"/>
<path d="M375.50 0V14" stroke="#3c3c3a" stroke-width="1"/>
<text x="377.30" y="9.6" font-family="Liberation Sans" font-size="7.3" fill="#4a4a48">500</text>
<path d="M379.25 12.5V14" stroke="#262624" stroke-width="1"/>
<path d="M383.00 11V14" stroke="#383834" stroke-width="1"/>
<path d="M386.75 12.5V14" stroke="#262624" stroke-width="1"/>
<path d="M390.50 11V14" stroke="#383834" stroke-width="1"/>
<path d="M394.25 12.5V14" stroke="#262624" stroke-width="1"/>
<path d="M398.00 11V14" stroke="#383834" stroke-width="1"/>
<path d="M401.75 12.5V14" stroke="#262624" stroke-width="1"/>
<path d="M405.50 11V14" stroke="#383834" stroke-width="1"/>
<path d="M409.25 12.5V14" stroke="#262624" stroke-width="1"/>
<path d="M413.00 0V14" stroke="#3c3c3a" stroke-width="1"/>
<text x="414.80" y="9.6" font-family="Liberation Sans" font-size="7.3" fill="#4a4a48">550</text>
<path d="M416.75 12.5V14" stroke="#262624" stroke-width="1"/>
<path d="M420.50 11V14" stroke="#383834" stroke-width="1"/>
<path d="M424.25 12.5V14" stroke="#262624" stroke-width="1"/>
<path d="M428.00 11V14" stroke="#383834" stroke-width="1"/>
<path d="M431.75 12.5V14" stroke="#262624" stroke-width="1"/>
<path d="M435.50 11V14" stroke="#383834" stroke-width="1"/>
<path d="M439.25 12.5V14" stroke="#262624" stroke-width="1"/>
<path d="M443.00 11V14" stroke="#383834" stroke-width="1"/>
<path d="M446.75 12.5V14" stroke="#262624" stroke-width="1"/>
<path d="M450.50 0V14" stroke="#3c3c3a" stroke-width="1"/>
<text x="452.30" y="9.6" font-family="Liberation Sans" font-size="7.3" fill="#4a4a48">600</text>
<path d="M454.25 12.5V14" stroke="#262624" stroke-width="1"/>
<path d="M458.00 11V14" stroke="#383834" stroke-width="1"/>
<path d="M461.75 12.5V14" stroke="#262624" stroke-width="1"/>
<path d="M465.50 11V14" stroke="#383834" stroke-width="1"/>
<path d="M469.25 12.5V14" stroke="#262624" stroke-width="1"/>
<path d="M473.00 11V14" stroke="#383834" stroke-width="1"/>
<path d="M476.75 12.5V14" stroke="#262624" stroke-width="1"/>
<path d="M480.50 11V14" stroke="#383834" stroke-width="1"/>
<path d="M484.25 12.5V14" stroke="#262624" stroke-width="1"/>
<path d="M488.00 0V14" stroke="#3c3c3a" stroke-width="1"/>
<text x="489.80" y="9.6" font-family="Liberation Sans" font-size="7.3" fill="#4a4a48">650</text>
<path d="M491.75 12.5V14" stroke="#262624" stroke-width="1"/>
<path d="M495.50 11V14" stroke="#383834" stroke-width="1"/>
<path d="M499.25 12.5V14" stroke="#262624" stroke-width="1"/>
<path d="M503.00 11V14" stroke="#383834" stroke-width="1"/>
<path d="M506.75 12.5V14" stroke="#262624" stroke-width="1"/>
<path d="M510.50 11V14" stroke="#383834" stroke-width="1"/>
<path d="M514.25 12.5V14" stroke="#262624" stroke-width="1"/>
<path d="M518.00 11V14" stroke="#383834" stroke-width="1"/>
<path d="M521.75 12.5V14" stroke="#262624" stroke-width="1"/>
<path d="M525.50 0V14" stroke="#3c3c3a" stroke-width="1"/>
<text x="527.30" y="9.6" font-family="Liberation Sans" font-size="7.3" fill="#4a4a48">700</text>
<path d="M529.25 12.5V14" stroke="#262624" stroke-width="1"/>
<path d="M533.00 11V14" stroke="#383834" stroke-width="1"/>
<path d="M536.75 12.5V14" stroke="#262624" stroke-width="1"/>
<path d="M540.50 11V14" stroke="#383834" stroke-width="1"/>
<path d="M544.25 12.5V14" stroke="#262624" stroke-width="1"/>
<path d="M548.00 11V14" stroke="#383834" stroke-width="1"/>
<path d="M551.75 12.5V14" stroke="#262624" stroke-width="1"/>
<path d="M555.50 11V14" stroke="#383834" stroke-width="1"/>
<path d="M559.25 12.5V14" stroke="#262624" stroke-width="1"/>
<path d="M563.00 0V14" stroke="#3c3c3a" stroke-width="1"/>
<text x="564.80" y="9.6" font-family="Liberation Sans" font-size="7.3" fill="#4a4a48">750</text>
<path d="M566.75 12.5V14" stroke="#262624" stroke-width="1"/>
<path d="M570.50 11V14" stroke="#383834" stroke-width="1"/>
<path d="M574.25 12.5V14" stroke="#262624" stroke-width="1"/>
<path d="M578.00 11V14" stroke="#383834" stroke-width="1"/>
<path d="M581.75 12.5V14" stroke="#262624" stroke-width="1"/>
<path d="M585.50 11V14" stroke="#383834" stroke-width="1"/>
<path d="M589.25 12.5V14" stroke="#262624" stroke-width="1"/>
<path d="M593.00 11V14" stroke="#383834" stroke-width="1"/>
<path d="M596.75 12.5V14" stroke="#262624" stroke-width="1"/>
<path d="M600.50 0V14" stroke="#3c3c3a" stroke-width="1"/>
<text x="602.30" y="9.6" font-family="Liberation Sans" font-size="7.3" fill="#4a4a48">800</text>
<path d="M604.25 12.5V14" stroke="#262624" stroke-width="1"/>
<path d="M608.00 11V14" stroke="#383834" stroke-width="1"/>
<path d="M611.75 12.5V14" stroke="#262624" stroke-width="1"/>
<path d="M615.50 11V14" stroke="#383834" stroke-width="1"/>
<path d="M619.25 12.5V14" stroke="#262624" stroke-width="1"/>
<path d="M623.00 11V14" stroke="#383834" stroke-width="1"/>
<path d="M626.75 12.5V14" stroke="#262624" stroke-width="1"/>
<path d="M630.50 11V14" stroke="#383834" stroke-width="1"/>
<path d="M634.25 12.5V14" stroke="#262624" stroke-width="1"/>
<path d="M638.00 0V14" stroke="#3c3c3a" stroke-width="1"/>
<text x="639.80" y="9.6" font-family="Liberation Sans" font-size="7.3" fill="#4a4a48">850</text>
<path d="M641.75 12.5V14" stroke="#262624" stroke-width="1"/>
<path d="M645.50 11V14" stroke="#383834" stroke-width="1"/>
<path d="M649.25 12.5V14" stroke="#262624" stroke-width="1"/>
<path d="M653.00 11V14" stroke="#383834" stroke-width="1"/>
<path d="M656.75 12.5V14" stroke="#262624" stroke-width="1"/>
<path d="M660.50 11V14" stroke="#383834" stroke-width="1"/>
<path d="M664.25 12.5V14" stroke="#262624" stroke-width="1"/>
<path d="M668.00 11V14" stroke="#383834" stroke-width="1"/>
<path d="M671.75 12.5V14" stroke="#262624" stroke-width="1"/>
<path d="M675.50 0V14" stroke="#3c3c3a" stroke-width="1"/>
<text x="677.30" y="9.6" font-family="Liberation Sans" font-size="7.3" fill="#4a4a48">900</text>
<path d="M679.25 12.5V14" stroke="#262624" stroke-width="1"/>
<path d="M683.00 11V14" stroke="#383834" stroke-width="1"/>
<path d="M686.75 12.5V14" stroke="#262624" stroke-width="1"/>
<path d="M690.50 11V14" stroke="#383834" stroke-width="1"/>
<path d="M694.25 12.5V14" stroke="#262624" stroke-width="1"/>
<path d="M698.00 11V14" stroke="#383834" stroke-width="1"/>
<path d="M701.75 12.5V14" stroke="#262624" stroke-width="1"/>
<path d="M705.50 11V14" stroke="#383834" stroke-width="1"/>
<path d="M709.25 12.5V14" stroke="#262624" stroke-width="1"/>
<path d="M713.00 0V14" stroke="#3c3c3a" stroke-width="1"/>
<text x="714.80" y="9.6" font-family="Liberation Sans" font-size="7.3" fill="#4a4a48">950</text>
<path d="M716.75 12.5V14" stroke="#262624" stroke-width="1"/>
<path d="M720.50 11V14" stroke="#383834" stroke-width="1"/>
<path d="M724.25 12.5V14" stroke="#262624" stroke-width="1"/>
<path d="M728.00 11V14" stroke="#383834" stroke-width="1"/>
<path d="M731.75 12.5V14" stroke="#262624" stroke-width="1"/>
<path d="M735.50 11V14" stroke="#383834" stroke-width="1"/>
<path d="M739.25 12.5V14" stroke="#262624" stroke-width="1"/>
<path d="M743.00 11V14" stroke="#383834" stroke-width="1"/>
<path d="M746.75 12.5V14" stroke="#262624" stroke-width="1"/>
<path d="M750.50 0V14" stroke="#3c3c3a" stroke-width="1"/>
<text x="752.30" y="9.6" font-family="Liberation Sans" font-size="7.3" fill="#4a4a48">1000</text>
<path d="M754.25 12.5V14" stroke="#262624" stroke-width="1"/>
<path d="M758.00 11V14" stroke="#383834" stroke-width="1"/>
<path d="M761.75 12.5V14" stroke="#262624" stroke-width="1"/>
<path d="M765.50 11V14" stroke="#383834" stroke-width="1"/>
<path d="M769.25 12.5V14" stroke="#262624" stroke-width="1"/>
<path d="M773.00 11V14" stroke="#383834" stroke-width="1"/>
<path d="M776.75 12.5V14" stroke="#262624" stroke-width="1"/>
<path d="M780.50 11V14" stroke="#383834" stroke-width="1"/>
<path d="M784.25 12.5V14" stroke="#262624" stroke-width="1"/>
<path d="M788.00 0V14" stroke="#3c3c3a" stroke-width="1"/>
<text x="789.80" y="9.6" font-family="Liberation Sans" font-size="7.3" fill="#4a4a48">1050</text>
<path d="M791.75 12.5V14" stroke="#262624" stroke-width="1"/>
<path d="M795.50 11V14" stroke="#383834" stroke-width="1"/>
<path d="M799.25 12.5V14" stroke="#262624" stroke-width="1"/>
<path d="M803.00 11V14" stroke="#383834" stroke-width="1"/>
<path d="M806.75 12.5V14" stroke="#262624" stroke-width="1"/>
<path d="M810.50 11V14" stroke="#383834" stroke-width="1"/>
<path d="M814.25 12.5V14" stroke="#262624" stroke-width="1"/>
<path d="M818.00 11V14" stroke="#383834" stroke-width="1"/>
<path d="M821.75 12.5V14" stroke="#262624" stroke-width="1"/>
<path d="M825.50 0V14" stroke="#3c3c3a" stroke-width="1"/>
<text x="827.30" y="9.6" font-family="Liberation Sans" font-size="7.3" fill="#4a4a48">1100</text>
<path d="M829.25 12.5V14" stroke="#262624" stroke-width="1"/>
<path d="M833.00 11V14" stroke="#383834" stroke-width="1"/>
<path d="M836.75 12.5V14" stroke="#262624" stroke-width="1"/>
<path d="M840.50 11V14" stroke="#383834" stroke-width="1"/>
<path d="M844.25 12.5V14" stroke="#262624" stroke-width="1"/>
<path d="M848.00 11V14" stroke="#383834" stroke-width="1"/>
<path d="M851.75 12.5V14" stroke="#262624" stroke-width="1"/>
<path d="M855.50 11V14" stroke="#383834" stroke-width="1"/>
<path d="M859.25 12.5V14" stroke="#262624" stroke-width="1"/>
<path d="M863.00 0V14" stroke="#3c3c3a" stroke-width="1"/>
<text x="864.80" y="9.6" font-family="Liberation Sans" font-size="7.3" fill="#4a4a48">1150</text>
<path d="M866.75 12.5V14" stroke="#262624" stroke-width="1"/>
<path d="M870.50 11V14" stroke="#383834" stroke-width="1"/>
<path d="M874.25 12.5V14" stroke="#262624" stroke-width="1"/>
<path d="M878.00 11V14" stroke="#383834" stroke-width="1"/>
<path d="M881.75 12.5V14" stroke="#262624" stroke-width="1"/>
<path d="M885.50 11V14" stroke="#383834" stroke-width="1"/>
<path d="M889.25 12.5V14" stroke="#262624" stroke-width="1"/>
<path d="M893.00 11V14" stroke="#383834" stroke-width="1"/>
<path d="M896.75 12.5V14" stroke="#262624" stroke-width="1"/>
<path d="M900.50 0V14" stroke="#3c3c3a" stroke-width="1"/>
<text x="902.30" y="9.6" font-family="Liberation Sans" font-size="7.3" fill="#4a4a48">1200</text>
<path d="M904.25 12.5V14" stroke="#262624" stroke-width="1"/>
<path d="M908.00 11V14" stroke="#383834" stroke-width="1"/>
<path d="M911.75 12.5V14" stroke="#262624" stroke-width="1"/>
<path d="M915.50 11V14" stroke="#383834" stroke-width="1"/>
<path d="M919.25 12.5V14" stroke="#262624" stroke-width="1"/>
<path d="M923.00 11V14" stroke="#383834" stroke-width="1"/>
<path d="M926.75 12.5V14" stroke="#262624" stroke-width="1"/>
<path d="M930.50 11V14" stroke="#383834" stroke-width="1"/>
<path d="M934.25 12.5V14" stroke="#262624" stroke-width="1"/>
<path d="M938.00 0V14" stroke="#3c3c3a" stroke-width="1"/>
<text x="939.80" y="9.6" font-family="Liberation Sans" font-size="7.3" fill="#4a4a48">1250</text>
<path d="M941.75 12.5V14" stroke="#262624" stroke-width="1"/>
<path d="M945.50 11V14" stroke="#383834" stroke-width="1"/>
<path d="M949.25 12.5V14" stroke="#262624" stroke-width="1"/>
<path d="M953.00 11V14" stroke="#383834" stroke-width="1"/>
<path d="M956.75 12.5V14" stroke="#262624" stroke-width="1"/>
<path d="M960.50 11V14" stroke="#383834" stroke-width="1"/>
<path d="M964.25 12.5V14" stroke="#262624" stroke-width="1"/>
<path d="M968.00 11V14" stroke="#383834" stroke-width="1"/>
<path d="M971.75 12.5V14" stroke="#262624" stroke-width="1"/>
<path d="M975.50 0V14" stroke="#3c3c3a" stroke-width="1"/>
<text x="977.30" y="9.6" font-family="Liberation Sans" font-size="7.3" fill="#4a4a48">1300</text>
<path d="M979.25 12.5V14" stroke="#262624" stroke-width="1"/>
<path d="M983.00 11V14" stroke="#383834" stroke-width="1"/>
<path d="M986.75 12.5V14" stroke="#262624" stroke-width="1"/>
<path d="M990.50 11V14" stroke="#383834" stroke-width="1"/>
<path d="M994.25 12.5V14" stroke="#262624" stroke-width="1"/>
<path d="M998.00 11V14" stroke="#383834" stroke-width="1"/>
<path d="M1001.75 12.5V14" stroke="#262624" stroke-width="1"/>
<path d="M1005.50 11V14" stroke="#383834" stroke-width="1"/>
<path d="M1009.25 12.5V14" stroke="#262624" stroke-width="1"/>
<path d="M1013.00 0V14" stroke="#3c3c3a" stroke-width="1"/>
<text x="1014.80" y="9.6" font-family="Liberation Sans" font-size="7.3" fill="#4a4a48">1350</text>
<path d="M1016.75 12.5V14" stroke="#262624" stroke-width="1"/>
<path d="M1020.50 11V14" stroke="#383834" stroke-width="1"/>
<path d="M1024.25 12.5V14" stroke="#262624" stroke-width="1"/>
<path d="M1028.00 11V14" stroke="#383834" stroke-width="1"/>
<path d="M1031.75 12.5V14" stroke="#262624" stroke-width="1"/>
<path d="M1035.50 11V14" stroke="#383834" stroke-width="1"/>
<path d="M1039.25 12.5V14" stroke="#262624" stroke-width="1"/>
<path d="M1043.00 11V14" stroke="#383834" stroke-width="1"/>
<path d="M1046.75 12.5V14" stroke="#262624" stroke-width="1"/>
<path d="M1050.50 0V14" stroke="#3c3c3a" stroke-width="1"/>
<text x="1052.30" y="9.6" font-family="Liberation Sans" font-size="7.3" fill="#4a4a48">1400</text>
<path d="M1054.25 12.5V14" stroke="#262624" stroke-width="1"/>
<path d="M1058.00 11V14" stroke="#383834" stroke-width="1"/>
<path d="M1061.75 12.5V14" stroke="#262624" stroke-width="1"/>
<path d="M1065.50 11V14" stroke="#383834" stroke-width="1"/>
<path d="M1069.25 12.5V14" stroke="#262624" stroke-width="1"/>
<path d="M1073.00 11V14" stroke="#383834" stroke-width="1"/>
<path d="M1076.75 12.5V14" stroke="#262624" stroke-width="1"/>
<path d="M1080.50 11V14" stroke="#383834" stroke-width="1"/>
<path d="M1084.25 12.5V14" stroke="#262624" stroke-width="1"/>
<path d="M1088.00 0V14" stroke="#3c3c3a" stroke-width="1"/>
<text x="1089.80" y="9.6" font-family="Liberation Sans" font-size="7.3" fill="#4a4a48">1450</text>
<path d="M1091.75 12.5V14" stroke="#262624" stroke-width="1"/>
<path d="M1095.50 11V14" stroke="#383834" stroke-width="1"/>
<path d="M1099.25 12.5V14" stroke="#262624" stroke-width="1"/>
<path d="M1103.00 11V14" stroke="#383834" stroke-width="1"/>
<path d="M1106.75 12.5V14" stroke="#262624" stroke-width="1"/>
<path d="M1110.50 11V14" stroke="#383834" stroke-width="1"/>
<path d="M1114.25 12.5V14" stroke="#262624" stroke-width="1"/>
<path d="M1118.00 11V14" stroke="#383834" stroke-width="1"/>
<path d="M1121.75 12.5V14" stroke="#262624" stroke-width="1"/>
<path d="M1125.50 0V14" stroke="#3c3c3a" stroke-width="1"/>
<text x="1127.30" y="9.6" font-family="Liberation Sans" font-size="7.3" fill="#4a4a48">1500</text>
<path d="M1129.25 12.5V14" stroke="#262624" stroke-width="1"/>
<path d="M1133.00 11V14" stroke="#383834" stroke-width="1"/>
</svg>
<!-- CANVAS -->
<div class="a" style="left:1570px;top:146px;width:6px;height:862px;background:#060608"></div>
<div class="a" style="left:1576px;top:146px;width:5px;height:862px;background:#0a0912"></div>
<div class="a" style="left:432px;top:159px;width:1139px;height:827px;border-radius:9px;background:#0a0428"></div>
<div class="a" style="left:433px;top:160px;width:1137px;height:825px;border:4px solid #9f80f8;border-left-width:3.5px;border-radius:8px;background:#212529"></div>
<div class="t cv" id="h1" style="left:479px;top:189px;-webkit-text-stroke:0.35px #f1f2f3;font-size:26px;color:#f1f2f3;letter-spacing:0.442px">App Connect Counter</div>
<div class="t cv" id="sub" style="left:479px;top:224px;font-size:15px;color:#d0d3d6;letter-spacing:-0.005px">A tiny fixture to demonstrate reactivity: update a Variable and watch the UI change.</div>
<div class="a" style="left:479px;top:258px;width:1046px;height:1px;background:#43474c"></div>
<div class="a" style="left:479px;top:281px;width:601px;height:247px;border:1px solid #474b55;border-radius:6px;background:linear-gradient(110deg,#253857 0%,#2d3a4f 45%,#3b3e46 100%)"></div>
<div class="a" style="left:525px;top:331px;width:96px;height:18px;border-radius:5px;background:#2c3036"></div>
<div class="t cv" id="b1" style="left:532px;top:334px;font-size:11px;color:#fff;font-weight:bold;letter-spacing:0.029px">Reactive starter</div>
<div class="t cv" id="h3a" style="left:525px;top:360px;font-size:23px;color:#fff;font-weight:bold;letter-spacing:-1.996px">Click</div>
<svg style="left:581px;top:368px" width="16" height="9" viewBox="0 0 16 9"><path d="M0 4.5h14.5M11 1l3.8 3.5L11 8" fill="none" stroke="#fff" stroke-width="1.6"/></svg>
<div class="t cv" id="h3b" style="left:604px;top:360px;font-size:23px;color:#fff;font-weight:bold;letter-spacing:-0.947px">action</div>
<svg style="left:676px;top:368px" width="16" height="9" viewBox="0 0 16 9"><path d="M0 4.5h14.5M11 1l3.8 3.5L11 8" fill="none" stroke="#fff" stroke-width="1.6"/></svg>
<div class="t cv" id="h3c" style="left:699px;top:360px;font-size:23px;color:#fff;font-weight:bold;letter-spacing:-0.926px">state</div>
<svg style="left:757px;top:368px" width="16" height="9" viewBox="0 0 16 9"><path d="M0 4.5h14.5M11 1l3.8 3.5L11 8" fill="none" stroke="#fff" stroke-width="1.6"/></svg>
<div class="t cv" id="h3d" style="left:781px;top:360px;font-size:23px;color:#fff;font-weight:bold;letter-spacing:-2.0px">UI</div>
<div class="t cv" id="p1" style="left:525px;top:395px;font-size:15px;color:#f4f5f6;letter-spacing:-0.028px">The button runs an App Connect action that updates a Variable.</div>
<div class="a" style="left:526px;top:428px;width:48px;height:20px;border-radius:5px;background:#2c3036"></div>
<div class="t cv" id="cnt" style="left:532px;top:433px;font-size:11px;color:#fff;font-weight:bold;letter-spacing:-0.087px">Count:</div>
<div class="a" style="left:582px;top:428px;width:21px;height:20px;border-radius:5px;background:#646a72"></div>
<div class="t cv" id="zero" style="left:588px;top:433px;font-size:11px;color:#fff;font-weight:bold;letter-spacing:2.875px">0</div>
<div class="t cv" id="fmt" style="left:525px;top:466px;font-size:13px;color:#c5c9cd;letter-spacing:-0.033px">Formatted example: <b style="color:#dfe2e5">$0.00</b></div>
<div class="a" style="left:1102px;top:281px;width:423px;height:247px;border:1px solid #3d4248;border-radius:6px"></div>
<div class="t cv" id="actn" style="left:1118px;top:299px;-webkit-text-stroke:0.35px #f1f2f3;font-size:19px;color:#f1f2f3;letter-spacing:0.115px">Actions</div>
<div class="t cv" id="p2" style="left:1118px;top:331px;font-size:15px;color:#c9ccd0;letter-spacing:-0.028px">This button increments the counter Variable.</div>
<div class="a" style="left:1118px;top:364px;width:91px;height:35px;border-radius:5px;background:#0d6efd"></div>
<div class="t cv" id="inc" style="left:1130px;top:375px;-webkit-text-stroke:0.2px #fff;font-size:15px;color:#fff;letter-spacing:0.037px">Increment</div>
<div class="a" style="left:1220px;top:364px;width:60px;height:35px;border-radius:5px;border:1px solid #5c636a"></div>
<div class="t cv" id="rst" style="left:1233px;top:375px;font-size:15px;color:#8d9399;letter-spacing:-1.047px">Reset</div>
<!-- breadcrumb -->
<div class="t" id="bc" style="left:821px;top:990px;font-size:14px;color:#6a6868;letter-spacing:-0.3px">App <span class="teal">app-connect-counter</span> &gt; Container <span class="teal">counterPage</span> &gt; Section <span class="teal">counterHero</span> &gt; Column &gt; Flex Container &gt; </div>
<div class="a" style="left:1438px;top:988px;width:136px;height:16px;border:1px solid #2c255c;border-radius:2px"></div>
<div class="t" id="bc2" style="left:1440px;top:990px;font-size:14px;color:#6a6868;letter-spacing:-0.315px">Badge <span class="teal">counterDisplay</span></div>
<svg style="left:1572px;top:561px" width="4" height="10" viewBox="0 0 4 10"><path d="M0.5 0v10M3.5 0v10" stroke="#2a2833" stroke-width="1"/></svg>

<!-- RIGHT PANEL -->
<div class="a hl" style="left:1582px;top:111px;width:338px;background:#07060c"></div>
<svg style="left:1794px;top:86px" width="20" height="17" viewBox="0 0 20 17"><path d="M9 2.5H1.6v13.8h13.8V9" fill="none" stroke="#41378c" stroke-width="1.4"/><path d="M16.5 0.8l2.7 2.7-9 9-3.8 1 1.1-3.7z" fill="none" stroke="#41378c" stroke-width="1.4" stroke-linejoin="round"/></svg>
<svg style="left:1828px;top:86px" width="18" height="17" viewBox="0 0 18 17"><rect x="-1.5" y="6.5" width="20" height="4" rx="2" fill="none" stroke="#626064" stroke-width="1.2" transform="rotate(45 9 8.5)"/><path d="M3.3 16.2l-1.5-3.2L12.8 2a1.4 1.4 0 0 1 2 0l.8.8a1.4 1.4 0 0 1 0 2L4.6 15.8z" fill="#0d0c16" stroke="#626064" stroke-width="1.2" stroke-linejoin="round"/></svg>
<svg style="left:1860px;top:86px" width="16" height="17" viewBox="0 0 16 17"><path d="M0.5 0.5h15l-1.4 13L8 16.5 1.9 13.5 1.5 10h3l.2 1.6L8 13l3.3-1.4.4-3.6H3.2l-.3-2.8h9l.3-2H2.2z" fill="#626064"/></svg>
<svg style="left:1893px;top:86px" width="12" height="17" viewBox="0 0 12 17"><path d="M0.8 0.8H6L4.8 5.6h6L3.6 16.4l1.4-7H0.8z" fill="none" stroke="#626064" stroke-width="1.2" stroke-linejoin="round"/></svg>
<div class="a" style="left:1585px;top:115px;width:262px;height:29px;border:1px solid #1b1926;border-radius:14px"></div>
<div class="t" style="left:1597px;top:123px;font-size:14px;color:#3a3744;letter-spacing:-0.363px">Filter Properties</div>
<svg style="left:1862px;top:128px" width="11" height="3" viewBox="0 0 11 3"><circle cx="1.5" cy="1.5" r="1.1" fill="#626064"/><circle cx="5.5" cy="1.5" r="1.1" fill="#626064"/><circle cx="9.5" cy="1.5" r="1.1" fill="#626064"/></svg>
<svg style="left:1891px;top:121px" width="17" height="17" viewBox="0 0 17 17"><circle cx="8.5" cy="8.5" r="7.6" fill="none" stroke="#626064" stroke-width="1.2"/><path d="M6.2 6.5a2.3 2.3 0 1 1 3.3 2c-.7.4-1 .8-1 1.6v.6" fill="none" stroke="#626064" stroke-width="1.2"/><circle cx="8.5" cy="12.8" r=".9" fill="#626064"/></svg>

<div class="t rp" style="left:1588px;top:165px;font-size:12px;color:#41378c;letter-spacing:-1.0px">ID</div>
<svg style="left:1664px;top:164.5px" width="13" height="13" viewBox="0 0 13 13"><rect x="0.6" y="0.6" width="11.8" height="11.8" rx="1.5" fill="none" stroke="#5e5a56" stroke-width="1.2"/><circle cx="6.5" cy="3.6" r=".9" fill="#5e5a56"/><path d="M5 5.6h2v4.2M4.8 9.8h3.4" fill="none" stroke="#5e5a56" stroke-width="1.2"/></svg>
<div class="a" style="left:1681px;top:157px;width:232px;height:28px;background:#000;border-radius:3px"></div>
<div class="t rp" style="left:1688px;top:164px;font-size:14px;color:#817f7f;letter-spacing:-0.355px">counterDisplay</div>
<div class="t rp" style="left:1588px;top:205px;font-size:12px;color:#41378c;letter-spacing:-1.004px">Class</div>
<svg style="left:1664px;top:204.5px" width="13" height="13" viewBox="0 0 13 13"><rect x="0.6" y="0.6" width="11.8" height="11.8" rx="1.5" fill="none" stroke="#5e5a56" stroke-width="1.2"/><circle cx="6.5" cy="3.6" r=".9" fill="#5e5a56"/><path d="M5 5.6h2v4.2M4.8 9.8h3.4" fill="none" stroke="#5e5a56" stroke-width="1.2"/></svg>
<div class="a" style="left:1681px;top:197px;width:232px;height:28px;background:#000;border-radius:3px"></div>
<div class="t rp" style="left:1688px;top:204px;font-size:14px;color:#817f7f;letter-spacing:-0.176px">badge text-bg-secondary</div>
<div class="t rp" style="left:1588px;top:246px;font-size:12px;color:#6c6a6b;letter-spacing:-0.426px">Badge</div>
<svg style="left:1664px;top:245.5px" width="13" height="13" viewBox="0 0 13 13"><rect x="0.6" y="0.6" width="11.8" height="11.8" rx="1.5" fill="none" stroke="#5e5a56" stroke-width="1.2"/><circle cx="6.5" cy="3.6" r=".9" fill="#5e5a56"/><path d="M5 5.6h2v4.2M4.8 9.8h3.4" fill="none" stroke="#5e5a56" stroke-width="1.2"/></svg>
<div class="a" style="left:1681px;top:238px;width:232px;height:28px;background:#000;border-radius:3px"></div>
<div class="t rp" style="left:1688px;top:245px;font-size:14px;color:#817f7f;letter-spacing:-0.797px">0</div>
<div class="t rp" style="left:1588px;top:286px;font-size:12px;color:#6c6a6b;letter-spacing:-0.1px">Position</div>
<svg style="left:1664px;top:285.5px" width="13" height="13" viewBox="0 0 13 13"><rect x="0.6" y="0.6" width="11.8" height="11.8" rx="1.5" fill="none" stroke="#5e5a56" stroke-width="1.2"/><circle cx="6.5" cy="3.6" r=".9" fill="#5e5a56"/><path d="M5 5.6h2v4.2M4.8 9.8h3.4" fill="none" stroke="#5e5a56" stroke-width="1.2"/></svg>
<div class="a" style="left:1681px;top:278px;width:232px;height:29px;background:#000;border-radius:3px"></div>
<div class="t rp" style="left:1688px;top:285px;font-size:14px;color:#817f7f;letter-spacing:-0.393px">Default</div>
<svg style="left:1895px;top:293px" width="7" height="4" viewBox="0 0 7 4"><path d="M0.5 0.5L3.5 3.5l3-3" fill="none" stroke="#767475" stroke-width="1.1"/></svg>
<div class="t rp" style="left:1588px;top:328px;font-size:12px;color:#6c6a6b;letter-spacing:-0.672px">Style</div>
<svg style="left:1664px;top:327.5px" width="13" height="13" viewBox="0 0 13 13"><rect x="0.6" y="0.6" width="11.8" height="11.8" rx="1.5" fill="none" stroke="#5e5a56" stroke-width="1.2"/><circle cx="6.5" cy="3.6" r=".9" fill="#5e5a56"/><path d="M5 5.6h2v4.2M4.8 9.8h3.4" fill="none" stroke="#5e5a56" stroke-width="1.2"/></svg>
<div class="a" style="left:1681px;top:320px;width:232px;height:29px;background:#000;border-radius:3px"></div>
<div class="t rp" style="left:1688px;top:327px;font-size:14px;color:#817f7f;letter-spacing:-0.393px">Default</div>
<svg style="left:1895px;top:335px" width="7" height="4" viewBox="0 0 7 4"><path d="M0.5 0.5L3.5 3.5l3-3" fill="none" stroke="#767475" stroke-width="1.1"/></svg>
<div class="a" style="left:1663px;top:363px;width:16px;height:16px;border:1.3px solid #3c3a44;border-radius:3px"></div>
<div class="t rp" style="left:1687px;top:365px;font-size:12px;color:#6c6a6b;letter-spacing:-0.339px">Pill</div>
<svg style="left:1707px;top:364px" width="13" height="13" viewBox="0 0 13 13"><circle cx="6.5" cy="6.5" r="6.5" fill="#55524f"/><circle cx="6.5" cy="3.5" r="1" fill="#0a0911"/><path d="M5.2 5.5h2v4M5 9.6h3.2" fill="none" stroke="#0a0911" stroke-width="1.3"/></svg>
<div class="a hl" style="left:1588px;top:392px;width:324px;background:#13121b"></div>
<div class="t rp" style="left:1588px;top:410px;font-size:14px;color:#7a7878;font-weight:bold;letter-spacing:-0.348px">CSS Variables</div>
<svg style="left:1893px;top:410px" width="12" height="12" viewBox="0 0 12 12"><path d="M6 0v12M0 6h12" stroke="#767475" stroke-width="1.3"/></svg>
<div class="a hl" style="left:1588px;top:442px;width:324px;background:#13121b"></div>
<div class="t rp" style="left:1588px;top:460px;font-size:14px;color:#7a7878;font-weight:bold;letter-spacing:0.127px">Dynamic Attributes</div>
<svg style="left:1893px;top:460px" width="12" height="12" viewBox="0 0 12 12"><path d="M6 0v12M0 6h12" stroke="#767475" stroke-width="1.3"/></svg>
<div class="a" style="left:1589px;top:503px;width:323px;height:56px;border:1px solid #121119;border-radius:2px"></div>
<div class="a" style="left:1600px;top:496px;width:90px;height:14px;background:#07070c"></div>
<div class="a" style="left:1607px;top:496px;width:15px;height:15px;border-radius:3px;background:#4a3f8a"></div>
<svg style="left:1610px;top:500px" width="9" height="7" viewBox="0 0 9 7"><path d="M0.8 3.5l2.6 2.5L8.2 0.8" fill="none" stroke="#c8c0e8" stroke-width="1.3"/></svg>
<div class="t rp" style="left:1630px;top:498px;font-size:12px;color:#3b3280;letter-spacing:-0.165px">Inner Text</div>
<div class="t rp" style="left:1600px;top:528px;font-size:12px;color:#3b3280;letter-spacing:-0.453px">Value</div>

<svg style="left:1677px;top:526.5px" width="13" height="13" viewBox="0 0 13 13"><rect x="0.6" y="0.6" width="11.8" height="11.8" rx="1.5" fill="none" stroke="#5e5a56" stroke-width="1.2"/><circle cx="6.5" cy="3.6" r=".9" fill="#5e5a56"/><path d="M5 5.6h2v4.2M4.8 9.8h3.4" fill="none" stroke="#5e5a56" stroke-width="1.2"/></svg>
<div class="a" style="left:1694px;top:519px;width:207px;height:30px;background:#000;border-radius:3px"></div>
<div class="a" style="left:1701px;top:522px;width:61px;height:23px;background:#6e4a26;border-radius:3px"></div>
<div class="t rp" style="left:1705px;top:528px;font-size:14px;color:#2a1c0e;letter-spacing:-0.338px">counter..</div>
<svg style="left:1883px;top:526px" width="9" height="14" viewBox="0 0 9 14"><path d="M5.5 0L0.5 7.5h3.5L3 14l5.5-8H5z" fill="#7a5028"/></svg>
<div class="a hl" style="left:1588px;top:572px;width:324px;background:#13121b"></div>
<div class="t rp" style="left:1588px;top:589px;font-size:14px;color:#7a7878;font-weight:bold;letter-spacing:-0.167px">Dynamic Events</div>
<svg style="left:1893px;top:589px" width="12" height="12" viewBox="0 0 12 12"><path d="M6 0v12M0 6h12" stroke="#767475" stroke-width="1.3"/></svg>
<div class="a hl" style="left:1588px;top:621px;width:324px;background:#13121b"></div>
<div class="t rp" style="left:1588px;top:640px;font-size:14px;color:#7a7878;font-weight:bold;letter-spacing:-0.245px">Static Events</div>
<svg style="left:1893px;top:640px" width="12" height="12" viewBox="0 0 12 12"><path d="M6 0v12M0 6h12" stroke="#767475" stroke-width="1.3"/></svg>

</body></html>
